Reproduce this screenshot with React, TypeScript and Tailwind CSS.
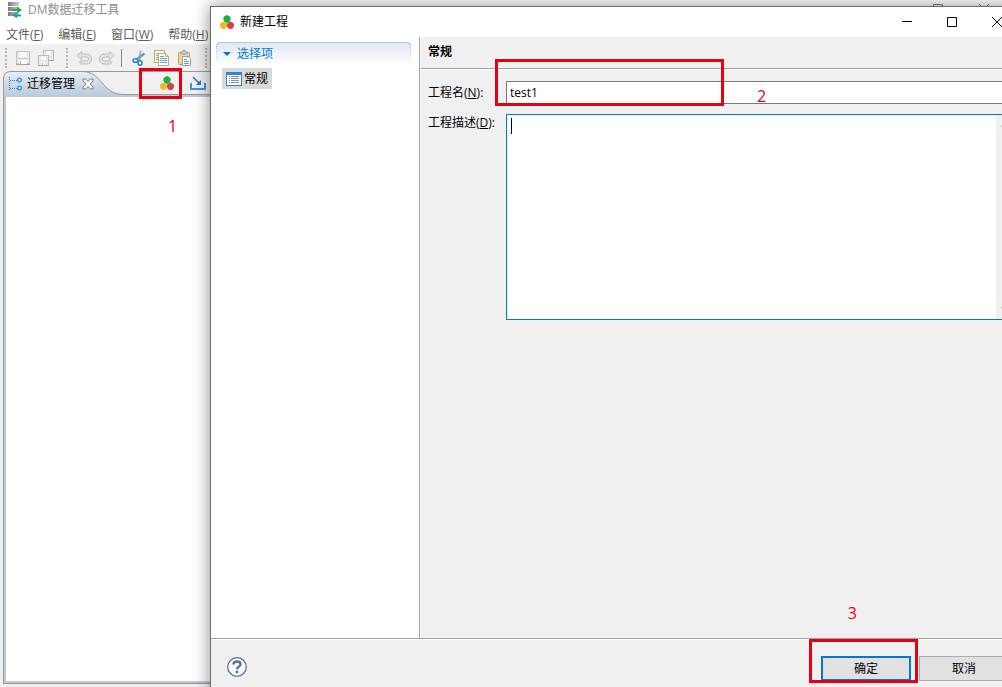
import type { ReactNode } from 'react';

function ServerIcon() {
  return (
    <svg width="16" height="16" viewBox="0 0 16 16">
      <defs>
        <linearGradient id="slab" x1="0" y1="0" x2="1" y2="0">
          <stop offset="0" stopColor="#77797b" />
          <stop offset="1" stopColor="#d0d1d2" />
        </linearGradient>
      </defs>
      <rect x="1" y="0" width="11" height="4" fill="url(#slab)" />
      <rect x="1" y="5" width="11" height="4" fill="url(#slab)" />
      <rect x="1" y="10" width="11" height="4" fill="url(#slab)" />
      <path d="M5 7h5V4.500l5 3.500-5 3.500V9H5z" fill="#27ae3f" />
      <path d="M14 14.500H10V16.500L5 13l5-3v2.500h4z" fill="#2f8fd6" />
    </svg>
  );
}

function ClusterIcon() {
  return (
    <svg width="16" height="16" viewBox="0 0 16 16">
      <path d="M8 1l3 1.500 .8 2.500L10.500 8 8 9 5.500 8 4.200 5 5 2.500z" fill="#22ac38" />
      <path d="M4.500 7.500l3 1.500 .7 2.500L7 14.200l-2.500 1-2.500-1L.8 11.500 1.500 9z" fill="#e6bf25" />
      <path d="M11.500 7.500l3 1.500 .7 2.500L14 14.200l-2.500 1-2.500-1-1.200-2.700L8.500 9z" fill="#d43f51" />
    </svg>
  );
}

function SaveIcon() {
  return (
    <svg width="16" height="16" viewBox="0 0 16 16">
      <rect x="1.500" y="1.500" width="13" height="12" fill="#e8e8e8" stroke="#c2c2c2" />
      <rect x="4" y="2" width="8" height="5" fill="#f8f8f8" />
      <path d="M3 8.500h10" stroke="#d0d0d0" />
      <rect x="4" y="10" width="8" height="4" fill="#fafafa" />
      <rect x="5" y="11" width="1" height="3" fill="#b5b5b5" />
      <path d="M1 14.500h14" stroke="#a5a5a5" />
    </svg>
  );
}

function SaveAllIcon() {
  return (
    <svg width="16" height="16" viewBox="0 0 16 16">
      <rect x="5.500" y=".5" width="10" height="10" fill="#e8e8e8" stroke="#bcbcbc" />
      <rect x="8" y="1" width="5" height="4" fill="#fafafa" />
      <rect x=".5" y="5.500" width="10" height="10" fill="#e8e8e8" stroke="#bcbcbc" />
      <rect x="3" y="6" width="5" height="4" fill="#fafafa" />
      <rect x="3" y="12" width="5" height="3" fill="#fafafa" />
      <rect x="4" y="13" width="1" height="2" fill="#a5a5a5" />
      <path d="M0 15.500h11M11 10.500h5" stroke="#a5a5a5" />
    </svg>
  );
}

function UndoIcon({ flip = false }: { flip?: boolean }) {
  return (
    <svg width="16" height="16" viewBox="0 0 16 16">
      <path
        transform={flip ? 'translate(16 0) scale(-1 1)' : undefined}
        d="M5.500 1.500L.8 5.500l4.700 4V7h4.500c2 0 2.500 1 2.500 2s-.5 2-2.500 2H4v3h7c3 0 4.500-2 4.500-5S14 4 11 4H5.500z"
        fill="#e4e4e4"
        stroke="#bdbdbd"
      />
    </svg>
  );
}

function CutIcon() {
  return (
    <svg width="16" height="16" viewBox="0 0 16 16" fill="none">
      <path d="M9.500 0.500L8.500 9l1 2" stroke="#9fb9d2" strokeWidth="2" />
      <path d="M13.500 3.500L5.500 9.500" stroke="#6f9cc4" strokeWidth="2.500" />
      <ellipse cx="4.500" cy="10.500" rx="2.500" ry="1.800" stroke="#2b84cb" strokeWidth="1.500" />
      <ellipse cx="9" cy="13" rx="2" ry="2.200" stroke="#2b84cb" strokeWidth="1.500" />
    </svg>
  );
}

function CopyIcon() {
  return (
    <svg width="16" height="16" viewBox="0 0 16 16">
      <rect x=".5" y=".5" width="10" height="12" fill="#fffbe9" stroke="#c4aa69" />
      <path d="M2 3.500h3M2 5.500h3M2 7.500h3M2 9.500h3" stroke="#86a5c6" />
      <path d="M4.500 3.500h7l3 3v9h-10z" fill="#fff" stroke="#c4aa69" />
      <path d="M6 6.500h4M6 8.500h7M6 10.500h7M6 12.500h7" stroke="#7898bd" />
      <path d="M11.500 3.500v3h3" fill="none" stroke="#c4aa69" />
    </svg>
  );
}

function PasteIcon() {
  return (
    <svg width="16" height="16" viewBox="0 0 16 16">
      <rect x="1.500" y="2.500" width="11" height="12" rx="1" fill="#f1d39b" stroke="#c39a55" />
      <path d="M4 4V2h2V.5h2V2h2v2z" fill="#d9dde2" stroke="#989da3" />
      <path d="M5.500 6.500h6l2 2v7h-8z" fill="#fff" stroke="#8d9db1" />
      <path d="M7 9.500h3M7 11.500h5M7 13.500h5" stroke="#7898bd" />
    </svg>
  );
}

function TreeIcon() {
  return (
    <svg width="14" height="14" viewBox="0 0 14 14" fill="none">
      <path d="M.5 0v13M1 3.500h7M1 11.500h7" stroke="#3b7fc0" strokeDasharray="1 1" />
      <circle cx="10.500" cy="3" r="1.800" fill="#fff" stroke="#3f94e0" strokeWidth="1.500" />
      <circle cx="10.500" cy="11" r="1.800" fill="#fff" stroke="#3f94e0" strokeWidth="1.500" />
    </svg>
  );
}

function ImportIcon() {
  return (
    <svg width="16" height="16" viewBox="0 0 16 16" fill="none" stroke="#3f94e0">
      <path d="M1 8v6h14V8" strokeWidth="2" />
      <path d="M3 2l6 6" stroke="#2775b6" strokeWidth="1.500" />
      <path d="M11 5v5H6z" fill="#2775b6" stroke="none" />
    </svg>
  );
}

function FormIcon() {
  return (
    <svg width="16" height="14" viewBox="0 0 16 14">
      <rect x=".5" y=".5" width="15" height="13" fill="#fff" stroke="#2b7fd0" />
      <rect width="16" height="3" fill="#2b86dc" />
      <path d="M3 4.500h1M3 6.500h1M3 8.500h1M3 10.500h1M5 4.500h8M5 6.500h8M5 8.500h8M5 10.500h8" stroke="#8593a6" />
    </svg>
  );
}

function Grip() {
  return <div className="h-5 w-0 border-l-2 border-dotted border-[#b8b8b8]" />;
}

function ToolButton({ label, children }: { label: string; children: ReactNode }) {
  return (
    <button type="button" aria-label={label} className="block h-4 w-4">
      {children}
    </button>
  );
}

const menus = [
  { text: '文件', accel: 'F' },
  { text: '编辑', accel: 'E' },
  { text: '窗口', accel: 'W' },
  { text: '帮助', accel: 'H' },
];

function MainWindow() {
  return (
    <div className="flex h-full flex-col">
      <header className="flex h-5 items-center bg-white pl-[7px] text-[#8f8f8f]">
        <ServerIcon />
        <span className="ml-[5px] flex-1">DM数据迁移工具</span>
        <svg width="60" height="12" viewBox="0 0 60 12" className="mr-3" fill="none" stroke="#777">
          <path d="M3.500 .5h9v9h-9zM49 0l10 10M59 0L49 10" />
        </svg>
      </header>

      <nav className="flex h-6 items-center gap-[15px] bg-white pt-[6px] pl-[6px] text-[#5c5c5c]">
        {menus.map((menu) => (
          <button key={menu.accel} type="button" className="whitespace-nowrap">
            {menu.text}(<u>{menu.accel}</u>)
          </button>
        ))}
      </nav>

      {/* Toolbar */}
      <div className="flex h-[27px] items-center pl-[5px]">
        <Grip />
        <div className="ml-2 flex gap-[7px]">
          <ToolButton label="保存"><SaveIcon /></ToolButton>
          <ToolButton label="全部保存"><SaveAllIcon /></ToolButton>
        </div>
        <div className="ml-3"><Grip /></div>
        <div className="ml-2 flex gap-[7px]">
          <ToolButton label="撤销"><UndoIcon /></ToolButton>
          <ToolButton label="重做"><UndoIcon flip /></ToolButton>
        </div>
        <div className="ml-[6px] h-[18px] w-px bg-[#858585]" />
        <div className="ml-[9px] flex gap-[7px]">
          <ToolButton label="剪切"><CutIcon /></ToolButton>
          <ToolButton label="复制"><CopyIcon /></ToolButton>
          <ToolButton label="粘贴"><PasteIcon /></ToolButton>
        </div>
        <div className="ml-3"><Grip /></div>
      </div>

      {/* View folder */}
      <div className="mx-[3px] mb-[3px] flex min-h-0 flex-1 flex-col">
        <div className="flex h-[26px]">
          <div className="relative flex w-[128px] items-center pl-[6px]">
            <svg className="absolute inset-0" width="128" height="26" viewBox="0 0 128 26">
              <defs>
                <linearGradient id="tabFill" x1="0" y1="0" x2="0" y2="1">
                  <stop offset="0" stopColor="#e6edf4" />
                  <stop offset="1" stopColor="#b9c9da" />
                </linearGradient>
              </defs>
              <path
                d="M.5 26V7Q1 1 7 .5H79C100 .5 98 23.500 121 23.500H128V26z"
                fill="url(#tabFill)"
              />
              <path d="M.5 26V7Q1 1 7 .5H128M79 .5C100 .5 98 23.500 121 23.500H128" fill="none" stroke="#999" />
            </svg>
            <div className="relative flex items-center">
              <TreeIcon />
              <span className="ml-1 text-black">迁移管理</span>
              <button type="button" aria-label="关闭" className="ml-[7px]">
                <svg width="12" height="12" viewBox="0 0 12 12">
                  <path
                    d="M1 1h2.500L6 3.500 8.500 1H11v2L8 6l3 3v2H8.500L6 8.500 3.500 11H1V9l3-3-3-3z"
                    fill="#fff"
                    stroke="#777"
                  />
                </svg>
              </button>
            </div>
          </div>
          <div className="flex flex-1 flex-col border-t border-r border-[#999]">
            <div className="flex flex-1 items-center gap-[15px] pl-[28px]">
              <ToolButton label="新建工程"><ClusterIcon /></ToolButton>
              <ToolButton label="导入"><ImportIcon /></ToolButton>
            </div>
            <div className="h-[3px] border-t border-[#999] bg-[#bccada]" />
          </div>
        </div>
        <div className="flex flex-1 border border-t-0 border-[#999]">
          <div className="flex-1 border-2 border-t-0 border-[#bccada] bg-white" />
        </div>
      </div>
    </div>
  );
}

function ProjectDialog() {
  return (
    <section className="absolute top-[6px] -right-5 -bottom-[11px] left-[210px] flex flex-col border border-[#6b6b6b] bg-[#f0f0f0] shadow-[0_0_16px_rgba(0,0,0,0.45)]">
      <header className="flex h-[30px] items-center bg-white pr-[2px] pl-2">
        <ClusterIcon />
        <h1 className="ml-[5px] flex-1">新建工程</h1>
        <button type="button" aria-label="最小化" className="flex w-[45px] justify-center">
          <svg width="10" height="10" stroke="#000"><path d="M0 4.500h10" /></svg>
        </button>
        <button type="button" aria-label="最大化" className="flex w-[45px] justify-center">
          <svg width="10" height="10" fill="none" stroke="#000"><path d="M.5 .5h9v9h-9z" /></svg>
        </button>
        <button type="button" aria-label="关闭窗口" className="flex w-[45px] justify-center">
          <svg width="10" height="10" stroke="#000"><path d="M0 0l10 10M10 0L0 10" /></svg>
        </button>
      </header>

      <div className="flex min-h-0 flex-1">
        <aside className="w-[209px] border-r border-[#a0a0a0] bg-white px-[5px] pt-[5px]">
          <div className="mr-[3px] rounded-t bg-linear-to-b from-[#b3c4dc] to-white px-px pt-px">
            <button
              type="button"
              className="flex h-[22px] w-full items-center rounded-t bg-linear-to-b from-[#e0e7f2] to-white pl-[6px] text-[#0078d7]"
            >
              <svg width="8" height="4" fill="#0078d7"><path d="M0 0h8L4 4z" /></svg>
              <span className="ml-[6px]">选择项</span>
            </button>
          </div>
          <button type="button" className="mt-[3px] ml-[6px] flex h-[21px] items-center gap-[2px] bg-[#d9d9d9] px-[4px]">
            <FormIcon />
            常规
          </button>
        </aside>

        <main className="flex min-w-0 flex-1 flex-col border-l border-white">
          <h2 className="flex h-8 items-center border-b border-[#a0a0a0] pb-[2px] pl-[7px] font-bold">常规</h2>
          <form className="grid grid-cols-[78px_1fr] gap-y-[10px] border-t border-white pt-[11px] pr-[7px] pl-[7px]">
            <label htmlFor="name" className="pt-1">工程名(<u>N</u>):</label>
            <input
              id="name"
              type="text"
              defaultValue="test1"
              className="h-[23px] min-w-0 border border-[#7a7a7a] bg-white px-[3px] outline-none"
            />
            <label htmlFor="description" className="pt-px">工程描述(<u>D</u>):</label>
            <div className="relative h-[206px]">
              <textarea
                id="description"
                className="block h-full w-full resize-none border border-[#0078d7] bg-white px-1 py-[3px] outline-none"
              />
              <div className="absolute top-1 left-[5px] h-4 w-px bg-black" />
              <div className="absolute inset-y-px right-px flex w-[17px] flex-col items-center justify-between bg-[#f0f0f0] py-2">
                <svg width="8" height="5" fill="none" stroke="#bfbfbf" strokeWidth="2"><path d="M0 4l4-3 4 3" /></svg>
                <svg width="8" height="5" fill="none" stroke="#bfbfbf" strokeWidth="2"><path d="M0 1l4 3 4-3" /></svg>
              </div>
            </div>
          </form>
        </main>
      </div>

      <footer className="border-t border-[#a0a0a0]">
        <div className="flex items-start gap-2 border-t border-white py-4 pr-3 pl-4">
          <button type="button" aria-label="帮助" className="mr-auto">
            <svg width="20" height="22" viewBox="0 -1 20 22" fill="none" stroke="#5f7395">
              <circle cx="10" cy="10" r="9.300" fill="#fafbfc" strokeWidth="1.300" />
              <path d="M6.500 7.500C6.500 3.500 13.500 3.500 13.500 7.500C13.500 9.500 10 9.500 10 12.200" strokeWidth="2.400" />
              <circle cx="10" cy="15" r="1.400" fill="#5f7395" stroke="none" />
            </svg>
          </button>
          <button type="submit" className="h-[25px] w-[90px] border-2 border-[#0078d7] bg-[#e1e1e1]">
            确定
          </button>
          <button type="button" className="h-[25px] w-[90px] border border-[#adadad] bg-[#e1e1e1]">
            取消
          </button>
        </div>
      </footer>
    </section>
  );
}

export default function App() {
  return (
    <div className="relative h-screen overflow-hidden bg-[#f0f0f0] font-['Open_Sans','Noto_Sans_CJK_SC',sans-serif] text-[12px] leading-4 text-black">
      <MainWindow />
      <ProjectDialog />

      {/* Step marks */}
      <div className="pointer-events-none text-[16px] leading-5 text-[#e60012]">
        <div className="absolute top-[68px] left-[139px] h-[31px] w-[43px] border-3 border-[#e60012]" />
        <span className="absolute top-[116px] left-[168px]">1</span>
        <div className="absolute top-[59px] left-[495px] h-[47px] w-[229px] border-3 border-[#e60012]" />
        <span className="absolute top-[86px] left-[757px]">2</span>
        <div className="absolute right-[84px] bottom-1 h-11 w-[109px] border-3 border-[#e60012]" />
        <span className="absolute right-[145px] bottom-[64px]">3</span>
      </div>
    </div>
  );
}
